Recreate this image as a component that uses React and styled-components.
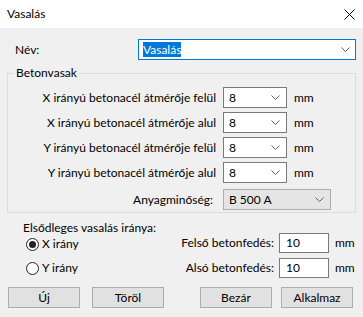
import React from "react";
import styled, { createGlobalStyle } from "styled-components";

const GlobalStyle = createGlobalStyle`
  html, body {
    margin: 0;
    padding: 0;
    background: #f0f0f0;
  }
  body {
    font-family: "Lato", "Open Sans", sans-serif;
    font-size: 12px;
    line-height: 16px;
    color: #000;
  }
`;

const Chevron = ({ color = "#606060" }) => (
  <svg width="9" height="5" viewBox="0 0 9 5">
    <path d="M0.5 0.5 L4.5 4.5 L8.5 0.5" fill="none" stroke={color} strokeWidth="1" />
  </svg>
);

const CloseIcon = () => (
  <svg width="11" height="11" viewBox="0 0 11 11">
    <path d="M0.5 0.5 L10.5 10.5 M10.5 0.5 L0.5 10.5" stroke="#000" strokeWidth="1" />
  </svg>
);

const rebars = [
  "X irányú betonacél átmérője felül",
  "X irányú betonacél átmérője alul",
  "Y irányú betonacél átmérője felül",
  "Y irányú betonacél átmérője alul",
];

function App() {
  return (
    <Window>
      <GlobalStyle />
      <TitleBar>
        <span>Vasalás</span>
        <CloseIcon />
      </TitleBar>
      <Body>
        <NameRow>
          <span>Név:</span>
          <NameCombo>
            <Selected>Vasalás</Selected>
            <Chevron />
          </NameCombo>
        </NameRow>

        <Group>
          <Legend>Betonvasak</Legend>
          <RebarGrid>
            {rebars.map((label) => (
              <React.Fragment key={label}>
                <RowLabel>{label}</RowLabel>
                <Combo>
                  <span>8</span>
                  <Chevron />
                </Combo>
                <Unit>mm</Unit>
              </React.Fragment>
            ))}
            <RowLabel $material>Anyagminőség:</RowLabel>
            <Combo $readonly $material>
              <span>B 500 A</span>
              <Chevron />
            </Combo>
          </RebarGrid>
        </Group>

        <Lower>
          <Direction>
            <div>Elsődleges vasalás iránya:</div>
            <RadioRow $first>
              <Radio $checked />
              X irány
            </RadioRow>
            <RadioRow>
              <Radio />
              Y irány
            </RadioRow>
          </Direction>
          <Cover>
            <CoverLabel>Felső betonfedés:</CoverLabel>
            <TextBox>10</TextBox>
            <Unit>mm</Unit>
            <CoverLabel>Alsó betonfedés:</CoverLabel>
            <TextBox>10</TextBox>
            <Unit>mm</Unit>
          </Cover>
        </Lower>

        <Buttons>
          <ButtonGroup>
            <Button>Új</Button>
            <Button>Töröl</Button>
          </ButtonGroup>
          <ButtonGroup $right>
            <Button>Bezár</Button>
            <Button>Alkalmaz</Button>
          </ButtonGroup>
        </Buttons>
      </Body>
    </Window>
  );
}

const Window = styled.div`
  width: 363px;
  height: 317px;
  display: flex;
  flex-direction: column;
  background: #f0f0f0;
  overflow: hidden;
`;

const TitleBar = styled.div`
  height: 28px;
  background: #fff;
  display: flex;
  align-items: center;
  justify-content: space-between;
  padding: 0 8px 0 7px;
  box-sizing: border-box;
`;

const Body = styled.div`
  flex: 1;
  display: flex;
  flex-direction: column;
  padding: 11px 7px 0 7px;
`;

const NameRow = styled.div`
  display: flex;
  align-items: center;
  justify-content: space-between;
  padding-left: 8px;
  height: 21px;
`;

const NameCombo = styled.div`
  width: 218px;
  height: 21px;
  box-sizing: border-box;
  border: 1px solid #0078d7;
  background: #fff;
  display: flex;
  align-items: center;
  justify-content: space-between;
  padding: 0 5px 0 4px;
`;

const Selected = styled.span`
  background: #0078d7;
  color: #fff;
  line-height: 15px;
`;

const Group = styled.div`
  position: relative;
  margin-top: 13px;
  border: 1px solid #dcdcdc;
  height: 140px;
  box-sizing: border-box;
  padding-top: 13px;
`;

const Legend = styled.span`
  position: absolute;
  top: -9px;
  left: 6px;
  padding: 0 2px;
  background: #f0f0f0;
`;

const RebarGrid = styled.div`
  display: grid;
  grid-template-columns: 209px 64px auto;
  column-gap: 6px;
  row-gap: 4px;
  align-items: center;
`;

const RowLabel = styled.div`
  text-align: right;
  margin-top: ${(p) => (p.$material ? "2px" : "0")};
  padding-right: ${(p) => (p.$material ? "4px" : "1px")};
`;

const Combo = styled.div`
  height: 21px;
  width: ${(p) => (p.$material ? "108px" : "64px")};
  margin-top: ${(p) => (p.$material ? "2px" : "0")};
  grid-column: ${(p) => (p.$material ? "2 / 4" : "auto")};
  box-sizing: border-box;
  border: 1px solid ${(p) => (p.$readonly ? "#adadad" : "#7a7a7a")};
  background: ${(p) => (p.$readonly ? "#e5e5e5" : "#fff")};
  display: flex;
  align-items: center;
  justify-content: space-between;
  padding: 0 6px 0 5px;
`;

const Unit = styled.div`
  padding-left: 1px;
`;

const Lower = styled.div`
  display: flex;
  justify-content: space-between;
  margin-top: 7px;
  height: 58px;
`;

const Direction = styled.div`
  display: flex;
  flex-direction: column;
  padding-left: 16px;
`;

const RadioRow = styled.label`
  display: flex;
  align-items: center;
  gap: 3px;
  height: 20px;
  padding-left: 3px;
  margin-top: ${(p) => (p.$first ? "-2px" : "4px")};
`;

const Radio = styled.span`
  width: 13px;
  height: 13px;
  box-sizing: border-box;
  border-radius: 50%;
  border: 1px solid #222;
  background: #fff;
  display: flex;
  align-items: center;
  justify-content: center;

  &::after {
    content: "";
    width: 7px;
    height: 7px;
    border-radius: 50%;
    background: ${(p) => (p.$checked ? "#222" : "transparent")};
  }
`;

const Cover = styled.div`
  display: grid;
  grid-template-columns: auto 50px 20px;
  column-gap: 5px;
  row-gap: 5px;
  align-items: center;
  align-content: start;
  margin-top: 13px;
  padding-right: 2px;
`;

const CoverLabel = styled.div`
  text-align: right;
`;

const TextBox = styled.div`
  height: 20px;
  box-sizing: border-box;
  border: 1px solid #7a7a7a;
  background: #fff;
  display: flex;
  align-items: center;
  padding-left: 6px;
`;

const Buttons = styled.div`
  display: flex;
  justify-content: space-between;
  margin-top: 9px;
  padding: 0 3px 0 1px;
`;

const ButtonGroup = styled.div`
  display: flex;
  gap: ${(p) => (p.$right ? "9px" : "12px")};
`;

const Button = styled.button`
  width: 72px;
  height: 21px;
  border: 1px solid #adadad;
  background: #e1e1e1;
  font: inherit;
  color: #000;
  padding: 0;
`;

export default App;
